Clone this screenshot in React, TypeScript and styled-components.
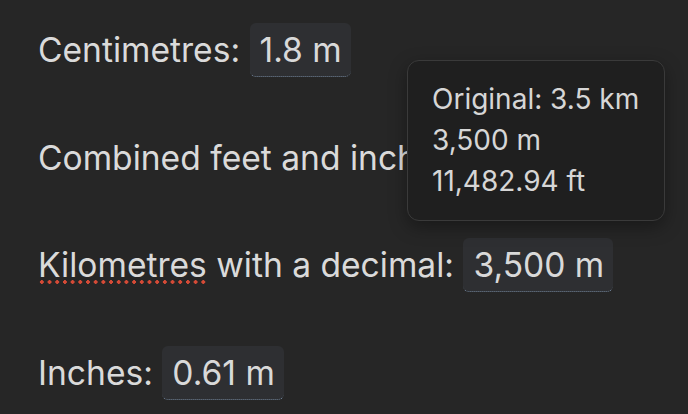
import React from "react";
import styled, { createGlobalStyle } from "styled-components";

const Global = createGlobalStyle`
  html, body {
    margin: 0;
    padding: 0;
    background: #262626;
  }
  body {
    font-family: Inter, "Noto Sans", "Liberation Sans", sans-serif;
    -webkit-font-smoothing: antialiased;
  }
`;

const Page = styled.div`
  position: relative;
  width: 688px;
  height: 414px;
  overflow: hidden;
  background: #262626;
  box-sizing: border-box;
  padding: 23px 0 0 38px;
  display: flex;
  flex-direction: column;
  gap: 53.5px;
`;

const Row = styled.div`
  font-size: 33.6px;
  line-height: 54px;
  height: 54px;
  color: #dadada;
  white-space: nowrap;
`;

const Chip = styled.span`
  display: inline-block;
  padding: 0 9px 0 10px;
  line-height: 53px;
  background: #2e2f32;
  border-radius: 6px;
  border-bottom: 1px dotted #71849a;
  color: #d9d9d9;
`;

const Misspelled = styled.span`
  background-image: radial-gradient(circle, #d54a36 1.6px, transparent 2px);
  background-repeat: repeat-x;
  background-size: 7.7px 6px;
  background-position: 0 100%;
`;

const Tooltip = styled.div`
  position: absolute;
  left: 407px;
  top: 60px;
  width: 258px;
  height: 161px;
  box-sizing: border-box;
  padding: 18px 0 0 24px;
  background: #1f1f1f;
  border: 1px solid #3a3a3a;
  border-radius: 12px;
  box-shadow: 0 6px 18px rgba(0, 0, 0, 0.35);
  display: flex;
  flex-direction: column;
`;

const TipLine = styled.div`
  font-size: 28px;
  line-height: 41px;
  color: #d6d6d6;
  white-space: nowrap;
`;

export default function App() {
  return (
    <>
      <Global />
      <Page>
        <Row>
          Centimetres: <Chip>1.8 m</Chip>
        </Row>
        <Row>
          Combined feet and inches: <Chip>1.85 m</Chip>
        </Row>
        <Row>
          <Misspelled>Kilometres</Misspelled> with a decimal: <Chip>3,500 m</Chip>
        </Row>
        <Row>
          Inches: <Chip>0.61 m</Chip>
        </Row>
        <Tooltip>
          <TipLine>Original: 3.5 km</TipLine>
          <TipLine>3,500 m</TipLine>
          <TipLine>11,482.94 ft</TipLine>
        </Tooltip>
      </Page>
    </>
  );
}
